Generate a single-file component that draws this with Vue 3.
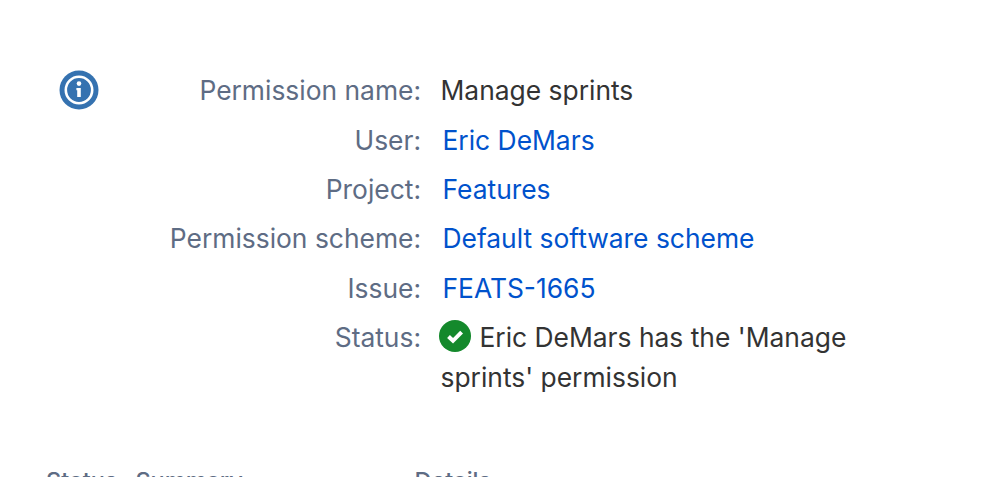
<template>
  <div class="page">
    <div class="panel">
      <svg class="info" viewBox="0 0 40 40" aria-hidden="true">
        <circle cx="20" cy="20" r="19.5" fill="#3572b0" />
        <circle cx="20" cy="20" r="13.2" fill="none" stroke="#fff" stroke-width="2.6" />
        <circle cx="20" cy="13.6" r="2.3" fill="#fff" />
        <path d="M17.4 18h4.4v9h-3.6v-6.8h-.8z" fill="#fff" />
      </svg>
      <div class="rows">
        <div v-for="row in rows" :key="row.label" class="row">
          <div class="label">{{ row.label }}</div>
          <div class="value">
            <a v-if="row.link" class="link" href="#">{{ row.value }}</a>
            <span v-else>{{ row.value }}</span>
          </div>
        </div>
        <div class="row status">
          <div class="label">Status:</div>
          <div class="value">
            <svg class="ok" viewBox="0 0 32 32" aria-hidden="true">
              <circle cx="16" cy="16" r="16" fill="#14892c" />
              <path d="M9.5 16.5l4.5 4.3 8.6-8.6" fill="none" stroke="#fff" stroke-width="4" />
            </svg>
            Eric DeMars has the 'Manage sprints' permission
          </div>
        </div>
      </div>
    </div>
    <div class="heads">
      <span class="h1">Status</span>
      <span class="h2">Summary</span>
      <span class="h3">Details</span>
    </div>
  </div>
</template>

<script setup>
const rows = [
  { label: 'Permission name:', value: 'Manage sprints', link: false },
  { label: 'User:', value: 'Eric DeMars', link: true },
  { label: 'Project:', value: 'Features', link: true },
  { label: 'Permission scheme:', value: 'Default software scheme', link: true },
  { label: 'Issue:', value: 'FEATS-1665', link: true },
]
</script>

<style>
html, body { margin: 0; background: #fff; overflow: hidden; }
</style>

<style scoped>
.page {
  width: 999px;
  height: 477px;
  overflow: hidden;
  font-family: Inter, "Liberation Sans", sans-serif;
  font-size: 26.4px;
  color: #333;
}
.panel {
  display: flex;
  padding: 70px 0 0 59px;
}
.info { width: 40px; height: 40px; flex: none; }
.rows { margin-top: 0.2px; }
.row {
  display: flex;
  gap: 19.5px;
  height: 49.4px;
  line-height: 40px;
}
.label {
  width: 322px;
  text-align: right;
  color: #5e6c84;
  flex: none;
}
.value { width: 420px; }
.link { color: #0052cc; text-decoration: none; margin-left: 2px; }
.status { height: auto; }
.ok { width: 32px; height: 32px; vertical-align: -5px; margin: 0 1px 0 -1.5px; }
.heads {
  display: flex;
  margin-top: 69px;
  padding-left: 46px;
  font-size: 23.5px;
  color: #5e6c84;
  font-weight: 500;
}
.h1 { margin-right: 18px; }
.h2 { width: 279px; }
</style>
